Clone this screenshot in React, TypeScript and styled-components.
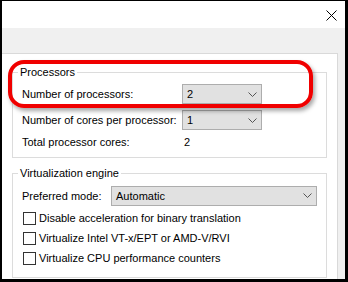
import styled, { createGlobalStyle } from "styled-components";

const GlobalStyle = createGlobalStyle`
  html, body {
    margin: 0;
    padding: 0;
    background: #ffffff;
  }
  * {
    box-sizing: border-box;
  }
`;

const Chevron = () => (
  <svg width="9" height="5" viewBox="0 0 9 5">
    <path d="M0.5 0.5 L4.5 4.5 L8.5 0.5" fill="none" stroke="#555" strokeWidth="1" />
  </svg>
);

const CloseIcon = () => (
  <svg width="11" height="11" viewBox="0 0 11 11">
    <path d="M0.5 0.5 L10.5 10.5 M10.5 0.5 L0.5 10.5" stroke="#000" strokeWidth="1" />
  </svg>
);

const Dropdown = ({ value, width }: { value: string; width: number }) => (
  <Select width={width}>
    <span>{value}</span>
    <Chevron />
  </Select>
);

const checks = [
  "Disable acceleration for binary translation",
  "Virtualize Intel VT-x/EPT or AMD-V/RVI",
  "Virtualize CPU performance counters",
];

export default function App() {
  return (
    <>
      <GlobalStyle />
      <Frame>
        <TitleBar>
          <CloseButton>
            <CloseIcon />
          </CloseButton>
        </TitleBar>
        <Strip />
        <Body>
          <Panel>
            <Group>
              <Legend>Processors</Legend>
              <ProcGrid>
                <Label>Number of processors:</Label>
                <Dropdown value="2" width={80} />
                <Label>Number of cores per processor:</Label>
                <Dropdown value="1" width={80} />
                <Label>Total processor cores:</Label>
                <Value>2</Value>
              </ProcGrid>
            </Group>
            <Group second>
              <Legend>Virtualization engine</Legend>
              <ModeRow>
                <Label>Preferred mode:</Label>
                <Dropdown value="Automatic" width={206} />
              </ModeRow>
              {checks.map((c) => (
                <CheckRow key={c}>
                  <Box />
                  <Label>{c}</Label>
                </CheckRow>
              ))}
            </Group>
          </Panel>
          <Gutter />
        </Body>
        <Callout />
      </Frame>
    </>
  );
}

const Frame = styled.div`
  position: relative;
  width: 348px;
  height: 282px;
  border-style: solid;
  border-color: #000;
  border-width: 1px 3px 3px 2px;
  display: flex;
  flex-direction: column;
  font-family: "Liberation Sans", Arial, sans-serif;
  font-size: 11px;
  color: #000;
  overflow: hidden;
`;

const TitleBar = styled.div`
  height: 27px;
  background: #ffffff;
  display: flex;
  justify-content: flex-end;
  align-items: flex-start;
`;

const CloseButton = styled.div`
  margin-top: 9px;
  margin-right: 8px;
  display: flex;
`;

const Strip = styled.div`
  height: 25px;
  background: #f0f0f0;
`;

const Body = styled.div`
  flex: 1;
  display: flex;
  background: #f0f0f0;
`;

const Panel = styled.div`
  flex: 1;
  background: #ffffff;
  border-top: 1px solid #d9d9d9;
  border-right: 1px solid #d9d9d9;
  padding: 11px 10px 0 10px;
`;

const Gutter = styled.div`
  width: 7px;
`;

const Group = styled.fieldset<{ second?: boolean }>`
  margin: ${(p) => (p.second ? "8px 0 0 0" : "0")};
  padding: 5px 9px ${(p) => (p.second ? "9px" : "7px")} 9px;
  border: 1px solid #dcdcdc;
  min-width: 0;
`;

const Legend = styled.legend`
  margin-left: -4px;
  padding: 0 2px;
  line-height: 14px;
`;

const ProcGrid = styled.div`
  display: grid;
  grid-template-columns: 160px 80px;
  grid-template-rows: 20px 20px 14px;
  row-gap: 6px;
  align-items: center;
  & > :nth-child(n + 5) {
    margin-top: -3px;
  }
`;

const Label = styled.span`
  white-space: nowrap;
  line-height: 14px;
`;

const Value = styled.span`
  padding-left: 2px;
  line-height: 14px;
`;

const Select = styled.div<{ width: number }>`
  width: ${(p) => p.width}px;
  height: 20px;
  background: #e1e1e1;
  border: 1px solid #adadad;
  display: flex;
  align-items: center;
  justify-content: space-between;
  padding: 0 4px 0 4px;
`;

const ModeRow = styled.div`
  display: flex;
  align-items: center;
  justify-content: space-between;
  height: 21px;
  margin-bottom: 2px;
`;

const CheckRow = styled.div`
  display: flex;
  align-items: center;
  height: 20px;
  gap: 3px;
`;

const Box = styled.span`
  width: 13px;
  height: 13px;
  margin-left: 1px;
  border: 1px solid #333;
  background: #fff;
`;

const Callout = styled.div`
  position: absolute;
  left: 6px;
  top: 59px;
  width: 305px;
  height: 48px;
  border: 4px solid #f00000;
  border-radius: 16px;
  box-shadow: 2px 3px 4px rgba(0, 0, 0, 0.35);
  pointer-events: none;
`;
